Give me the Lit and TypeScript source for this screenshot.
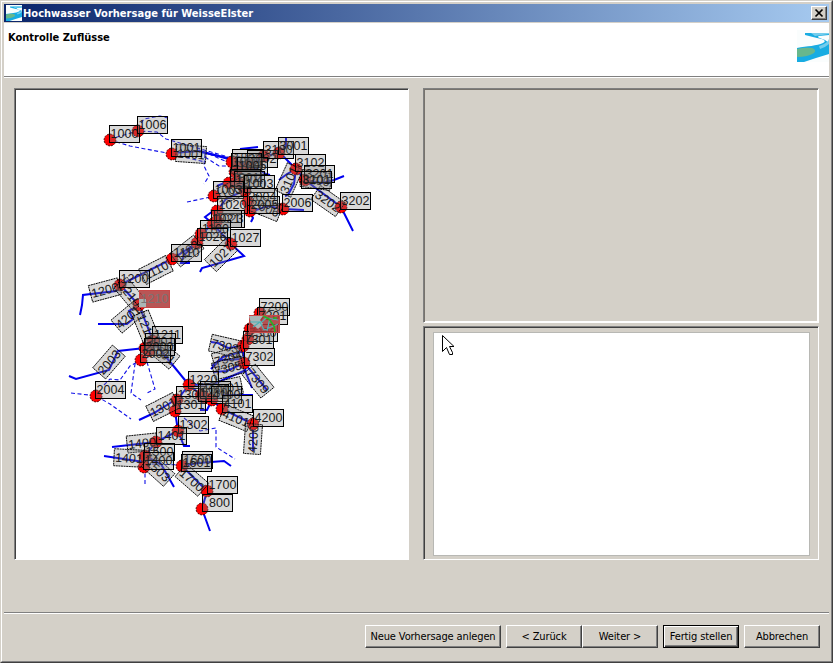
import { LitElement, html, css, svg } from "lit";
import { customElement, property } from "lit/decorators.js";

type Pt = [number, number];
type Label = [number, number, string];
type Turned = [number, number, number, string];

// Drawing coordinates of the river network share the window's origin.
const rivers: string[] = [
  "172,153 200,151 232,160 252,166", "201,152 228,158", "264,156 280,153 296,169 305,180 341,207 353,231",
  "286,138 286,146 280,153", "296,169 287,174 279,180", "305,180 322,183 334,180 344,176",
  "232,163 238,178 245,190 248,202 250,212 253,218 251,222", "240,149 258,147", "264,156 250,165 266,174 270,175",
  "296,169 294,184 288,195 285,196", "250,212 268,206 283,209 304,210", "245,190 226,199 217,211 213,224 201,234",
  "217,186 229,181 245,190", "213,224 201,234 197,243 172,259 120,285", "213,224 231,244 244,256 202,268 200,272",
  "197,243 184,255 181,263 190,263", "120,285 116,291 83,295 82,305 80,315", "120,285 139,305 153,341",
  "139,305 129,311 133,319 127,324 98,324", "153,341 189,385", "145,348 118,351 109,370 76,379 69,376",
  "189,385 177,400 175,411 178,431 156,442 112,447", "175,400 154,413 139,420", "178,431 184,446 190,446",
  "156,442 145,456 144,467", "144,462 104,456", "145,456 161,464 174,487", "189,385 214,384 225,379 246,370",
  "189,385 201,395 212,400 222,409 253,424 253,451", "212,400 207,410 200,410", "222,395 253,395",
  "260,313 250,329 248,339 243,346 244,363 246,373 252,388", "243,346 228,348 218,343 211,342",
  "244,363 227,371 213,372", "244,351 223,357 212,366", "244,363 258,379 267,390", "244,359 220,360 211,369",
  "182,466 198,463 224,461 231,466", "182,466 207,491 202,509 210,531", "213,224 205,217 213,211",
];

const creeks: string[] = [
  "110,140 130,146 172,154 205,162", "110,139 138,131 157,132 166,139 190,146 232,158",
  "141,123 144,119 160,116 168,118", "205,154 204,166 209,176 204,184", "187,202 206,198 214,196",
  "205,157 219,166 232,166", "209,154 225,161 237,160", "71,393 89,395 96,396 110,404 131,419",
  "104,385 110,379 120,380 130,366 141,360", "141,360 135,364 131,393 141,400", "147,362 155,389 147,393",
  "184,418 200,431 216,428 216,447 235,459", "145,467 145,486", "152,464 182,465",
];

const turned: Turned[] = [
  [191, 154, 4, "1001"], [156, 270, -27, "1110"], [187, 251, -38, "1102"], [221, 255, -45, "1027"],
  [105, 290, -15, "1200"], [130, 294, 50, "1210"], [128, 317, -40, "4201"], [146, 327, 68, "1211"],
  [109, 362, -49, "2003"], [163, 353, 40, "2001"], [163, 407, -27, "1301"], [225, 346, 13, "7303"],
  [228, 358, -16, "7304"], [228, 368, -14, "7305"], [258, 381, 51, "7309"], [236, 418, 22, "4101"],
  [253, 439, -86, "4200"], [142, 443, -6, "1400"], [129, 458, 3, "1401"], [158, 470, 42, "1503"],
  [192, 480, 41, "1700"], [289, 180, -66, "3101"], [328, 201, 35, "3202"], [266, 208, 22, "2006"],
  [316, 180, 8, "3200"], [234, 190, -25, "1004"], [247, 166, 5, "1002"], [227, 388, -12, "4001"],
];

const labels: Label[] = [
  [109, 125, "1000"], [137, 116, "1006"], [171, 139, "1001"], [232, 149, "1802"], [247, 150, "3002"],
  [263, 141, "3100"], [278, 137, "3001"], [295, 154, "3102"], [304, 165, "3201"], [301, 171, "3101"],
  [340, 192, "3202"], [282, 194, "2006"], [231, 153, "1002"], [237, 157, "1005"], [230, 169, "1801"],
  [234, 171, "1004"], [244, 175, "1003"], [213, 181, "1003"], [217, 196, "1020"], [247, 188, "2004"],
  [249, 196, "2005"], [214, 210, "1023"], [211, 210, "1021"], [200, 220, "1100"], [197, 228, "1026"],
  [230, 229, "1027"], [171, 244, "1110"], [119, 270, "1200"], [152, 326, "1211"], [145, 333, "2001"],
  [144, 338, "2000"], [140, 345, "2002"], [95, 381, "2004"], [259, 298, "7200"], [257, 307, "7201"],
  [247, 324, "7300"], [243, 331, "7301"], [244, 348, "7302"], [188, 371, "1220"], [176, 386, "1300"],
  [175, 396, "1301"], [178, 416, "1302"], [156, 427, "1401"], [144, 443, "1500"], [143, 452, "1400"],
  [200, 381, "4000"], [198, 384, "1230"], [211, 386, "4100"], [222, 395, "4101"], [253, 409, "4200"],
  [182, 451, "1600"], [181, 454, "1601"], [207, 476, "1700"], [202, 494, "800"],
];

const gauges: Pt[] = [
  [110, 140], [138, 131], [172, 154], [232, 162], [249, 165], [264, 156], [279, 153], [296, 169],
  [305, 180], [341, 207], [283, 209], [235, 172], [238, 168], [229, 183], [237, 182], [245, 191], [214, 196],
  [217, 211], [248, 202], [250, 211], [213, 224], [217, 221], [201, 234], [197, 243], [231, 244], [172, 259],
  [120, 285], [139, 305], [153, 341], [145, 348], [149, 351], [141, 360], [96, 396], [260, 313],
  [256, 321], [250, 329], [248, 339], [243, 346], [244, 363], [189, 385], [177, 400], [175, 411],
  [178, 431], [156, 442], [145, 456], [144, 467], [201, 395], [204, 397], [212, 400], [222, 409],
  [253, 424], [182, 466], [207, 491], [202, 509],
];

@customElement("river-map")
export class RiverMap extends LitElement {
  static styles = css`
    :host { display: block; background: #fff; overflow: hidden; }
    svg { display: block; }
    .river { fill: none; stroke: #0000f0; stroke-width: 2; }
    .creek { fill: none; stroke: #1010e8; stroke-width: 1.1; stroke-dasharray: 4 2.5; }
    .gauge { fill: #f00; stroke: #400; stroke-width: 0.9; stroke-dasharray: 2 1; }
    .box { fill: rgba(128, 128, 128, 0.3); stroke: #000; stroke-width: 1; }
    .tilt { stroke-dasharray: 2 0.6; stroke-width: 0.9; }
    .num { font: 12.5px "Liberation Sans", sans-serif; fill: #181818; text-anchor: middle; }
    .picked { fill: rgba(172, 56, 56, 0.85); stroke: #c84848; }
    .pickedNum { fill: #7c7474; }
    .teal { fill: none; stroke: #4db1b5; stroke-width: 1.2; }
    .green { fill: none; stroke: #24b524; stroke-width: 1.6; }
    .grey { fill: #a9b6b6; }
  `;
  render() {
    return html`<svg width="392" height="469" viewBox="16 90 392 469">
      ${creeks.map((p) => svg`<polyline class="creek" points=${p}></polyline>`)}
      ${rivers.map((p) => svg`<polyline class="river" points=${p}></polyline>`)}
      ${gauges.map(([x, y]) => svg`<circle class="gauge" cx=${x} cy=${y} r="5.9"></circle>`)}
      ${turned.map(([x, y, a, t]) => svg`<g transform="translate(${x} ${y}) rotate(${a})">
        <rect class="box tilt" x="-15" y="-8.5" width="30" height="17"></rect>
        <text class="num" y="4.5">${t}</text></g>`)}
      ${labels.map(([x, y, t]) => svg`<g>
        <rect class="box" x=${x + 0.5} y=${y + 0.5} width="30" height="17"></rect>
        <text class="num" x=${x + (t.length === 3 ? 17.5 : 15.5)} y=${y + 13}>${t}</text></g>`)}
      <rect class="box picked" x="139.500" y="290.500" width="30" height="17"></rect>
      <rect class="grey" x="139" y="299" width="7" height="8"></rect>
      <text class="num pickedNum" x="154.500" y="303">1210</text>
      <rect class="box picked" x="249.500" y="315.500" width="30" height="17"></rect>
      <path class="grey" d="M249 316h14l-3 4 3 4-5 5-7-6z"></path>
      <path class="teal" d="M250 322h12l4-4 12 2M253 327l7-5 4 8 14-6M267 331l3-13"></path>
      <path class="green" d="M263 316l6 3 5 7 1 6M273 318h4"></path>
    </svg>`;
  }
}

@customElement("river-logo")
export class RiverLogo extends LitElement {
  @property({ type: Number }) size = 32;
  static styles = css`
    :host { display: block; flex: none; }
    svg { display: block; background: #fafdfd; }
    .water { fill: #18ace2; }
    .shine { fill: #74cdec; }
    .land { fill: #68b78c; }
  `;
  render() {
    return html`<svg width=${this.size} height=${this.size} viewBox="0 0 32 32">
      <path class="water" d="M8 3H32V5L22 6C19 7 23 8 28 10L32 13V24L19 28 7 32H0V18C10 16 20 16 26 13 30 11 27 9 20 8L8 5Z"></path>
      <path class="shine" d="M14 3H32V4L18 6ZM22 16Q31 13 32 9V14Q29 17 23 19Z"></path>
      <path class="land" d="M0 19Q8 17 15 18 20 20 17 23 11 27 0 27Z"></path>
    </svg>`;
  }
}

@customElement("app-root")
export class AppRoot extends LitElement {
  static styles = css`
    :host {
      display: block; height: 663px; box-sizing: border-box; background: #d4d0c8;
      border: 1px solid; border-color: #d4d0c8 #404040 #404040 #d4d0c8;
      font: 11px "DejaVu Sans Condensed", "DejaVu Sans", sans-serif; color: #000;
    }
    .frame {
      height: 661px; box-sizing: border-box; padding: 2px;
      border: 1px solid; border-color: #fff #808080 #808080 #fff;
      display: flex; flex-direction: column;
    }
    .title {
      height: 18px; margin-bottom: 1px; padding: 0 2px; display: flex; align-items: center;
      background: linear-gradient(90deg, #0a246a, #a6caf0);
      color: #fff; font-weight: bold; white-space: nowrap;
    }
    .caption { flex: 1; padding-left: 1px; letter-spacing: 0.03px; }
    .close {
      width: 16px; height: 14px; box-sizing: border-box; background: #d4d0c8;
      border: 1px solid; border-color: #fff #404040 #404040 #fff; box-shadow: inset -1px -1px #808080;
    }
    .close svg { display: block; }
    .cross { stroke: #000; stroke-width: 1.7; }
    .head {
      height: 53px; background: #fff; display: flex; justify-content: space-between;
      border-bottom: 1px solid #808080; box-shadow: 0 1px #fff;
    }
    .heading { padding: 8px 0 0 4px; font-weight: bold; letter-spacing: 0; }
    .logo { margin-top: 7px; }
    .body {
      height: 472px; margin: 11px 10px 0; display: grid;
      grid-template-columns: 395px 396px; column-gap: 14px;
    }
    .side { display: grid; grid-template-rows: 235px 234px; row-gap: 3px; }
    .sunken {
      box-sizing: border-box; border: 1px solid; border-color: #808080 #fff #fff #808080;
      box-shadow: inset 1px 1px #404040; padding: 1px 0 0 1px;
    }
    .soft { box-shadow: inset 1px 1px #77736d, inset -1px -1px #fff; }
    .result { padding: 5px 8px 4px 9px; }
    .sheet { height: 221px; border: 1px solid #b8b8b4; background: #fff; padding: 1px 0 0 8px; }
    .pointer { display: block; }
    .arrow { fill: #fff; stroke: #000; }
    .foot {
      margin-top: 52px; border-top: 1px solid #808080; box-shadow: inset 0 1px #fff;
      padding: 12px 9px 0; display: flex; justify-content: flex-end;
    }
    .btn {
      font: inherit; color: inherit; background: #d4d0c8; width: 76px; height: 23px; padding: 0 0 1px;
      border: 1px solid; border-color: #fff #404040 #404040 #fff; border-radius: 0;
      box-shadow: inset -1px -1px #808080; margin: 0 0 0 5px; white-space: nowrap; box-sizing: border-box;
      letter-spacing: -0.12px;
    }
    .wide { width: 136px; }
    .joined { margin-left: 0; }
    .default { border-color: #000; box-shadow: inset 1px 1px #fff, inset -1px -1px #404040, inset -2px -2px #808080; }
  `;
  render() {
    return html`<div class="frame">
      <div class="title">
        <river-logo size="16"></river-logo><span class="caption">Hochwasser Vorhersage für WeisseElster</span>
        <div class="close"><svg width="14" height="12" viewBox="0 0 14 12"><path class="cross" d="M3.500 2.500l7 7M10.500 2.500l-7 7"></path></svg></div>
      </div>
      <div class="head"><div class="heading">Kontrolle Zuflüsse</div><river-logo class="logo" size="32"></river-logo></div>
      <div class="body">
        <div class="sunken"><river-map></river-map></div>
        <div class="side">
          <div class="sunken soft"></div>
          <div class="sunken result"><div class="sheet">
            <svg class="pointer" width="13" height="22" viewBox="0 0 13 22"><path class="arrow" d="M.5 1.500V17.500L4.500 13.500 7.500 20.500 10.500 20.500 10.500 18.500 7.500 12.500H12Z"></path></svg>
          </div></div>
        </div>
      </div>
      <div class="foot">
        <button class="btn wide">Neue Vorhersage anlegen</button>
        <button class="btn">&lt; Zurück</button><button class="btn joined">Weiter &gt;</button>
        <button class="btn default">Fertig stellen</button><button class="btn">Abbrechen</button>
      </div>
    </div>`;
  }
}
